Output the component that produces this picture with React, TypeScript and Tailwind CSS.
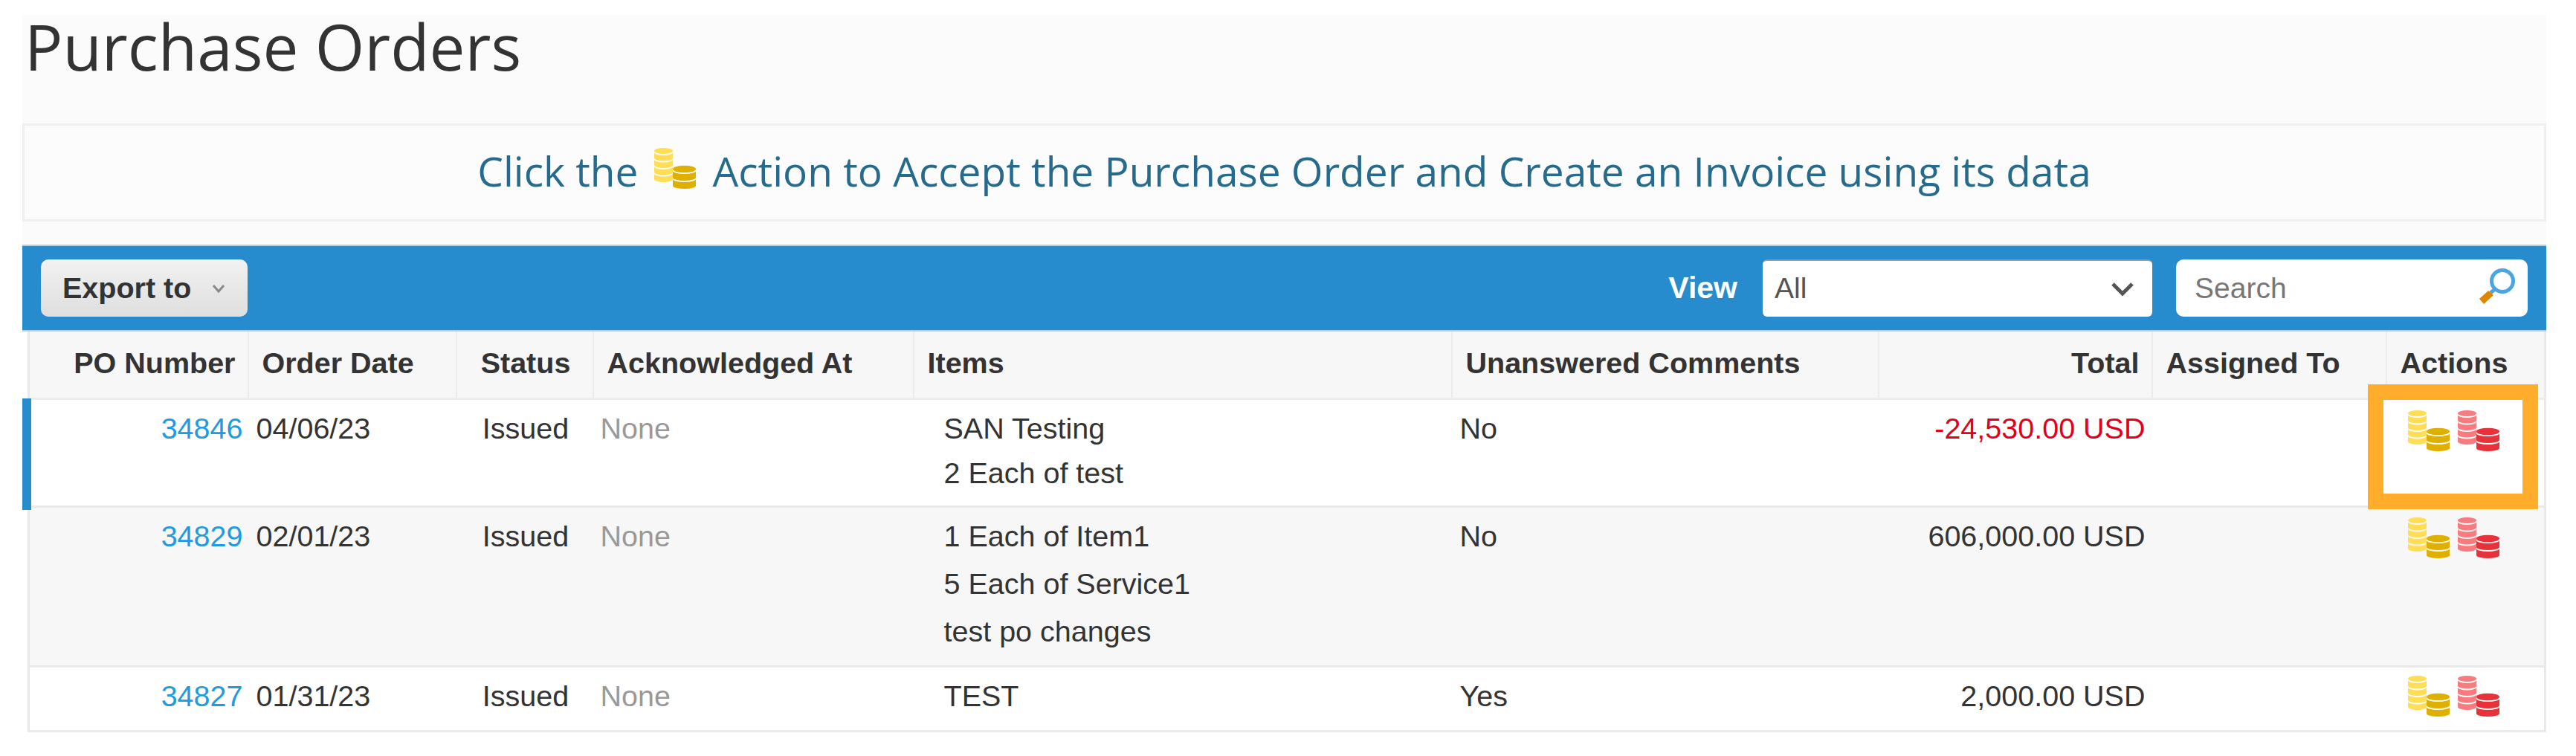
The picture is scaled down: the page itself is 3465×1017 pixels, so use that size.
const sans = "font-['Liberation_Sans',Arial,sans-serif]";

const columns = [
  { label: "PO Number", width: "w-[295px]", head: "pr-[16px] text-right" },
  { label: "Order Date", width: "w-[280px]", head: "pl-[18px] text-left" },
  { label: "Status", width: "w-[184px]", head: "pl-[3px] text-center" },
  { label: "Acknowledged At", width: "w-[431px]", head: "pl-[18px] text-left" },
  { label: "Items", width: "w-[724px]", head: "pl-[18px] text-left" },
  { label: "Unanswered Comments", width: "w-[574px]", head: "pl-[18px] text-left" },
  { label: "Total", width: "w-[368px]", head: "pr-[16px] text-right" },
  { label: "Assigned To", width: "w-[315px]", head: "pl-[18px] text-left" },
  { label: "Actions", width: "w-[214px]", head: "pl-[18px] text-left" },
];

const orders = [
  {
    po: "34846",
    date: "04/06/23",
    items: ["SAN Testing", "2 Each of test"],
    comments: "No",
    total: "-24,530.00 USD",
    negative: true,
    rowClass: "h-[145px] bg-white",
    itemsClass: "mt-[2px] leading-[60px]",
    iconPad: "pt-[14px]",
  },
  {
    po: "34829",
    date: "02/01/23",
    items: ["1 Each of Item1", "5 Each of Service1", "test po changes"],
    comments: "No",
    total: "606,000.00 USD",
    negative: false,
    rowClass: "h-[215px] bg-[#f7f7f7]",
    itemsClass: "",
    iconPad: "pt-[13px]",
  },
  {
    po: "34827",
    date: "01/31/23",
    items: ["TEST"],
    comments: "Yes",
    total: "2,000.00 USD",
    negative: false,
    rowClass: "h-[87px] bg-white",
    itemsClass: "",
    iconPad: "pt-[11px]",
  },
];

const Coins = ({ light, dark, className }: { light: string; dark: string; className?: string }) => {
  // one coin edge: top follows the coin above, bottom curves down
  const band = (x: number, y: number, w: number, h: number) =>
    `M${x} ${y}a${w / 2} 4 0 0 0 ${w} 0v${h}a${w / 2} 4 0 0 1 ${-w} 0z`;
  return (
    <svg width="56" height="55" viewBox="0 0 56 55" className={`shrink-0 ${className ?? ""}`}>
      <g fill={light}>
        <ellipse cx="12.5" cy="4" rx="12.5" ry="4" />
        <path d={band(0, 6, 25, 7.5)} />
        <path d={band(0, 15.5, 25, 7.5)} />
        <path d={band(0, 25, 25, 7.5)} />
        <path d={band(0, 34.5, 25, 7.5)} />
      </g>
      <g fill={dark}>
        <ellipse cx="40.5" cy="28.5" rx="15.5" ry="4.8" />
        <path d={band(25, 31, 31, 9)} />
        <path d={band(25, 42, 31, 9)} />
      </g>
    </svg>
  );
};

export default function App() {
  return (
    <div className={`min-h-screen bg-white pt-[20px] pl-[30px] ${sans}`}>
      <div className="relative w-[3395px]">
        <div className="h-[309px] bg-[#fbfbfb] font-['Open_Sans',sans-serif]">
          <h1 className="h-[146px] pl-[3px] text-[85.5px] leading-[84px] text-[#333333]">Purchase Orders</h1>
          <div className="flex h-[132px] items-center justify-center gap-[22px] border-[3px] border-[#efefef] bg-[#fcfcfc] pb-[4px] text-[55px] text-[#266b8e]">
            <span>Click the</span>
            <Coins light="#ffdd55" dark="#e0b000" className="mb-[8px]" />
            <span>Action to Accept the Purchase Order and Create an Invoice using its data</span>
          </div>
        </div>

        <div className="flex h-[117px] items-center justify-between border-y-2 border-[#a9d3ee] bg-[#278cce] px-[25px]">
          <button className="flex h-[77px] w-[278px] items-center gap-[28px] rounded-[10px] bg-gradient-to-b from-[#f2f2f2] to-[#dedede] pl-[29px] text-[39.5px] font-bold text-[#333333]">
            Export to
            <svg width="18" height="14" viewBox="0 0 18 14" fill="none" stroke="#888888" strokeWidth="3">
              <path d="M2 3l7 8 7-8" />
            </svg>
          </button>
          <div className="flex items-center">
            <span className="mr-[34px] text-[41px] font-bold text-white">View</span>
            <div className="mr-[32px] flex h-[77px] w-[524px] items-center justify-between rounded-[6px] border-t-2 border-[#999999] bg-white pr-[24px] pl-[16px] text-[39px] text-[#555555]">
              All
              <svg width="32" height="22" viewBox="0 0 32 22" fill="none" stroke="#555555" strokeWidth="5">
                <path d="M3 4l13 13 13-13" />
              </svg>
            </div>
            <div className="relative h-[77px] w-[473px] rounded-[10px] bg-white">
              <input
                placeholder="Search"
                className="h-full w-full pr-[90px] pl-[25px] text-[39px] text-[#555555] outline-none placeholder:text-[#777777]"
              />
              <svg width="56" height="56" viewBox="0 0 56 56" className="absolute top-[9px] right-[14px]">
                <circle cx="36" cy="20" r="14.5" fill="none" stroke="#4aa5e0" strokeWidth="5" />
                <path d="M26 31l-6 5" stroke="#4aa5e0" strokeWidth="5" />
                <path d="M5 44l12-11 7 6-13 12z" fill="#e08500" />
              </svg>
            </div>
          </div>
        </div>

        <div className="pl-[7px]">
          <table className="w-[3385px] table-fixed border-r-[3px] border-b-[3px] border-l-[3px] border-[#e9e9e9] text-[39.5px] text-[#333333]">
            <thead>
              <tr className="h-[90px] border-b-[3px] border-[#ececec] bg-[#f7f7f7]">
                {columns.map((col) => (
                  <th
                    key={col.label}
                    className={`${col.width} ${col.head} border-r-2 border-[#ececec] pb-[3px] font-bold whitespace-nowrap last:border-r-0`}
                  >
                    {col.label}
                  </th>
                ))}
              </tr>
            </thead>
            <tbody className="leading-[64px]">
              {orders.map((order) => (
                <tr key={order.po} className={`${order.rowClass} border-b-[3px] border-[#e9e9e9] align-top last:border-b-0`}>
                  <td className="pt-[6px] pr-[7px] text-right text-[#1f9be0]">{order.po}</td>
                  <td className="pt-[6px] pl-[11px]">{order.date}</td>
                  <td className="pt-[6px] pl-[3px] text-center">Issued</td>
                  <td className="pt-[6px] pl-[10px] text-[#999999]">None</td>
                  <td className="pt-[6px] pl-[41px]">
                    <div className={order.itemsClass}>
                      {order.items.map((item) => (
                        <div key={item}>{item}</div>
                      ))}
                    </div>
                  </td>
                  <td className="pt-[6px] pl-[11px]">{order.comments}</td>
                  <td className={`pt-[6px] pr-[9px] text-right ${order.negative ? "text-[#e2001a]" : ""}`}>{order.total}</td>
                  <td />
                  <td className={order.iconPad}>
                    <div className="flex gap-[11px] pl-[29px]">
                      <Coins light="#ffdd55" dark="#e0b000" />
                      <Coins light="#f87b7f" dark="#e8323a" />
                    </div>
                  </td>
                </tr>
              ))}
            </tbody>
          </table>
        </div>

        {/* selected row marker */}
        <div className="absolute top-[516px] left-0 h-[150px] w-[12px] bg-[#278cce]" />
        {/* highlight drawn over the screenshot */}
        <div className="absolute top-[497px] left-[3155px] h-[168px] w-[229px] border-[21px] border-[#ffad2b]" />
      </div>
    </div>
  );
}
